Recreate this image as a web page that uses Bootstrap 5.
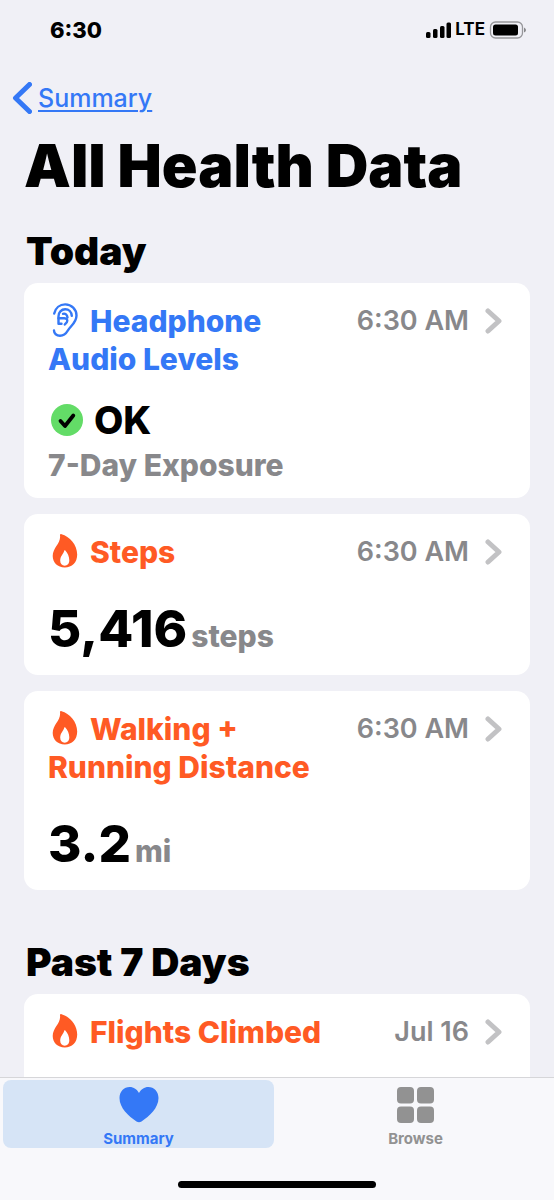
<!DOCTYPE html>
<html lang="en">
<head>
<meta charset="utf-8">
<meta name="viewport" content="width=device-width, initial-scale=1">
<title>All Health Data</title>
<link href="https://cdn.jsdelivr.net/npm/bootstrap@5.3.0/dist/css/bootstrap.min.css" rel="stylesheet">
<style>
  :root { --blue: #3478f6; --orange: #ff5a24; --gray: #88888b; }
  body { font-family: Inter, "Liberation Sans", sans-serif; background: #f0f0f6; color: #000; }
  svg { display: block; flex: none; }
  main { min-height: 0; }
  .status-bar { height: 60px; padding: 0 28px 0 50px; font-size: 22px; font-weight: 800; }
  .network { font-size: 17px; font-weight: 700; }
  .back-link { height: 38px; margin: 19px 12px 0; gap: 6px; font-size: 25px; line-height: 38px; font-weight: 500; color: var(--blue); text-decoration: none; }
  .back-link span { text-decoration: underline; text-decoration-thickness: 2px; text-underline-offset: 3px; }
  h1 { margin: 14px 24px 0; font-size: 59px; line-height: 70px; font-weight: 900; white-space: nowrap; }
  h2 { margin: 0 26px; font-size: 39px; line-height: 48px; font-weight: 900; }
  .today { margin-top: 26px; }
  .past { margin-top: 48px; }
  .entries { margin: 8px 24px 0; gap: 16px; }
  .entry { border: 0; border-radius: 14px; padding: 19px 24px 16px; color: #000; text-decoration: none; }
  .entry-title { margin: 0; font-size: 30px; line-height: 38px; font-weight: 800; color: var(--orange); max-width: 290px; }
  .entry-title svg { display: inline-block; vertical-align: -5px; margin: 0 12px 0 4px; }
  .entry-title.audio { color: var(--blue); max-width: 250px; }
  .when { font-size: 27px; line-height: 38px; font-weight: 600; color: var(--gray); gap: 16px; }
  .reading { margin-top: 28px; gap: 4px; font-size: 51px; line-height: 60px; font-weight: 800; }
  .unit { font-size: 30px; line-height: 38px; font-weight: 800; color: var(--gray); }
  .verdict { margin-top: 20px; padding-left: 3px; gap: 11px; font-size: 38px; line-height: 44px; font-weight: 800; }
  .exposure { margin: 4px 0 -2px; font-size: 30px; line-height: 38px; font-weight: 800; color: var(--gray); }
  .tab-bar { height: 123px; border-top: 1px solid #d6d6d9; background: #f8f8fb; }
  .tab-item { height: 68px; margin: 2px 3px; padding: 7px 0 0; gap: 7px; border: 0; border-radius: 8px; background: none; color: #929292; font-size: 15px; line-height: 18px; font-weight: 700; }
  .tab-item.active { background: #d6e4f6; color: var(--blue); }
  .home-indicator { width: 198px; height: 7px; margin-bottom: 12px; border-radius: 4px; background: #000; }
</style>
</head>
<body>
<svg width="0" height="0" class="position-absolute" aria-hidden="true">
  <symbol id="flame" viewBox="0 0 26 34">
    <path fill="currentColor" fill-rule="evenodd" d="M8 1.200C7.800.4 8.600-.1 9.500.2C17.500 2.500 25.200 10.500 25.200 20.500C25.200 28.500 20 33.500 12.800 33.500C5.500 33.500.7 28.500.7 22C.7 13.500 9.200 9.500 8 1.200ZM12.300 16.500C11.500 20 8.200 22 8.200 26.500C8.200 29.800 10 31.700 12.700 31.700C15.400 31.700 17.300 29.700 17.300 26.300C17.300 22.500 15.500 18.500 13.300 16.400C12.900 16 12.400 16.100 12.300 16.500Z"/>
  </symbol>
  <symbol id="chevron" viewBox="0 0 17 26">
    <path d="M3 3L14 13L3 23" fill="none" stroke="#c2c2c4" stroke-width="5" stroke-linecap="round" stroke-linejoin="round"/>
  </symbol>
</svg>
<div class="vh-100 d-flex flex-column overflow-hidden">
  <main class="flex-grow-1 overflow-hidden">
    <div class="status-bar d-flex align-items-center justify-content-between">
      <span>6:30</span>
      <div class="network d-flex align-items-center gap-1">
        <svg width="27" height="18" viewBox="0 0 27 18" aria-hidden="true"><rect x="2" y="11" width="4.500" height="6" rx="1.500"/><rect x="9" y="8" width="4.500" height="9" rx="1.500"/><rect x="16" y="5" width="4.500" height="12" rx="1.500"/><rect x="22.500" y="1.500" width="4.500" height="15.500" rx="1.500"/></svg>
        <span>LTE</span>
        <svg width="37" height="18" viewBox="0 0 37 18" aria-hidden="true"><rect x="1.500" y="1" width="32" height="16" rx="5" fill="none" stroke="#97979b" stroke-width="1.300"/><rect x="4" y="3.500" width="25" height="11" rx="2.500"/><path d="M35 6.500Q37 7.500 37 9T35 11.500Z" fill="#88888b"/></svg>
      </div>
    </div>
    <nav class="d-flex">
      <a class="back-link d-flex align-items-center" href="#">
        <svg width="20" height="32" viewBox="0 0 20 32" aria-hidden="true"><path d="M17.500 2.500L3.500 16L17.500 29.500" fill="none" stroke="currentColor" stroke-width="5" stroke-linecap="round" stroke-linejoin="round"/></svg>
        <span>Summary</span>
      </a>
    </nav>
    <h1>All Health Data</h1>

    <h2 class="today">Today</h2>
    <div class="entries d-flex flex-column">
      <a class="card entry" href="#">
        <div class="d-flex justify-content-between">
          <h3 class="entry-title audio"><svg width="26" height="34" viewBox="0 0 26 34" fill="none" stroke="currentColor" stroke-width="2.400" stroke-linecap="round" stroke-linejoin="round" aria-hidden="true"><path d="M2.200 10.500C3.500 5 7.800 1.400 13.200 1.400C19.500 1.400 24.500 6.300 24.500 12.500C24.500 20 18.500 22.500 15.500 28C13.500 31.500 11.500 32.700 8 32.700C4.500 32.700 2 30.500 2 27.500"/><path d="M19.800 12.800C19.500 9 16.900 6.300 13.200 6.300C9.300 6.300 6.500 9.300 6.500 13.300V20.700H9.500"/><path d="M6.500 15.200H12.300C15 15.200 16 17 14.800 19.200L12.800 21.500"/><path d="M11 10.800C13.400 10.200 15.200 11.800 15.500 14.500"/></svg>Headphone Audio Levels</h3>
          <div class="when d-flex align-items-center align-self-start text-nowrap"><time>6:30 AM</time><svg width="17" height="26" class="me-1" aria-hidden="true"><use href="#chevron"/></svg></div>
        </div>
        <div class="verdict d-flex align-items-center">
          <svg width="32" height="32" viewBox="0 0 32 32" aria-hidden="true"><circle cx="16" cy="16" r="16" fill="#63dc67"/><path d="M9.500 17L14 22L22.300 11.500" fill="none" stroke="#000" stroke-width="3.800" stroke-linecap="round" stroke-linejoin="round"/></svg>
          <span>OK</span>
        </div>
        <p class="exposure">7-Day Exposure</p>
      </a>
      <a class="card entry" href="#">
        <div class="d-flex justify-content-between">
          <h3 class="entry-title"><svg width="26" height="34" aria-hidden="true"><use href="#flame"/></svg>Steps</h3>
          <div class="when d-flex align-items-center align-self-start text-nowrap"><time>6:30 AM</time><svg width="17" height="26" class="me-1" aria-hidden="true"><use href="#chevron"/></svg></div>
        </div>
        <div class="reading d-flex align-items-baseline"><span>5,416</span><span class="unit">steps</span></div>
      </a>
      <a class="card entry" href="#">
        <div class="d-flex justify-content-between">
          <h3 class="entry-title"><svg width="26" height="34" aria-hidden="true"><use href="#flame"/></svg>Walking + Running Distance</h3>
          <div class="when d-flex align-items-center align-self-start text-nowrap"><time>6:30 AM</time><svg width="17" height="26" class="me-1" aria-hidden="true"><use href="#chevron"/></svg></div>
        </div>
        <div class="reading d-flex align-items-baseline"><span>3.2</span><span class="unit">mi</span></div>
      </a>
    </div>

    <h2 class="past">Past 7 Days</h2>
    <div class="entries d-flex flex-column">
      <a class="card entry pb-5" href="#">
        <div class="d-flex justify-content-between">
          <h3 class="entry-title"><svg width="26" height="34" aria-hidden="true"><use href="#flame"/></svg>Flights Climbed</h3>
          <div class="when d-flex align-items-center align-self-start text-nowrap"><time>Jul 16</time><svg width="17" height="26" class="me-1" aria-hidden="true"><use href="#chevron"/></svg></div>
        </div>
      </a>
    </div>
  </main>
  <footer class="tab-bar flex-shrink-0 d-flex flex-column justify-content-between">
    <nav class="d-flex">
      <button type="button" class="tab-item active col d-flex flex-column align-items-center" aria-current="page">
        <svg width="40" height="36" viewBox="0 0 40 36" aria-hidden="true"><path fill="currentColor" d="M20 6C18 2.500 14.700 0 10.700 0C5 0 .5 4.500.5 11C.5 21 9.500 29 17.500 34.500Q20 36 22.500 34.500C30.500 29 39.500 21 39.500 11C39.500 4.500 35 0 29.300 0C25.300 0 22 2.500 20 6Z"/></svg>
        <span>Summary</span>
      </button>
      <button type="button" class="tab-item col d-flex flex-column align-items-center">
        <svg width="37" height="36" viewBox="0 0 37 36" fill="currentColor" aria-hidden="true"><rect width="17" height="16.500" rx="4"/><rect x="20" width="17" height="16.500" rx="4"/><rect y="19.500" width="17" height="16.500" rx="4"/><rect x="20" y="19.500" width="17" height="16.500" rx="4"/></svg>
        <span>Browse</span>
      </button>
    </nav>
    <div class="home-indicator mx-auto"></div>
  </footer>
</div>
<script src="https://cdn.jsdelivr.net/npm/bootstrap@5.3.0/dist/js/bootstrap.bundle.min.js"></script>
</body>
</html>
